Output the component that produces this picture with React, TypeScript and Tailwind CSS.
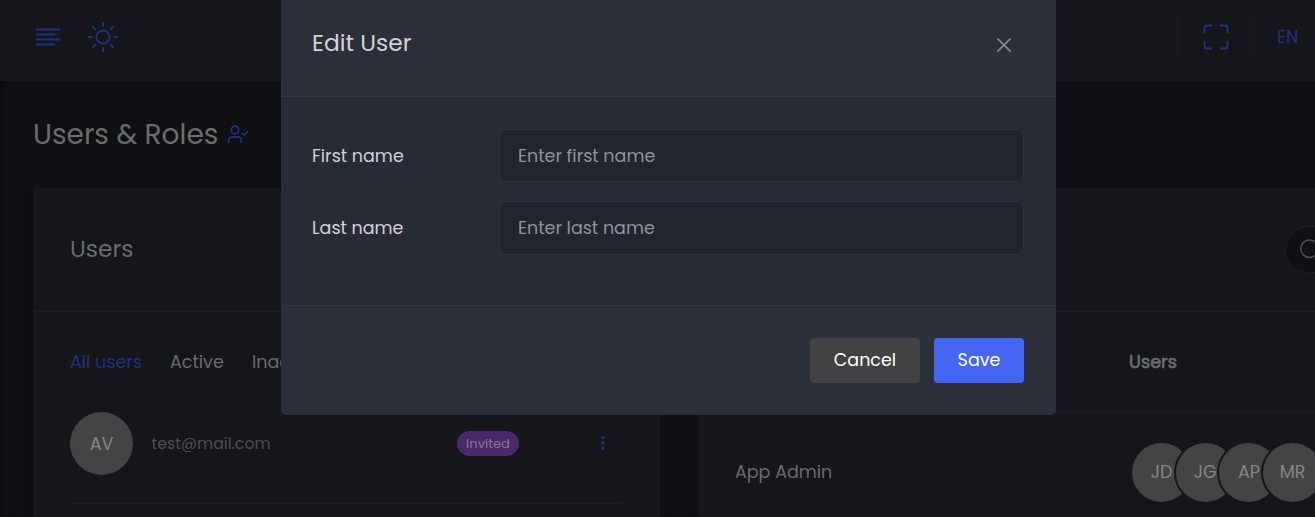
import React from "react";

const avatars = ["JD", "JG", "AP", "MR"];

function MenuIcon() {
  return (
    <svg className="h-[30px] w-[26px]" viewBox="0 0 26 30" stroke="currentColor" strokeWidth="2">
      <path d="M1 7.5h24.3M1 12.5h19.3M1 17.5h24.3M1 22.5h19.3" />
    </svg>
  );
}

function SunIcon() {
  return (
    <svg className="h-[30px] w-[30px]" viewBox="-15 -15 30 30" fill="none" stroke="currentColor" strokeWidth="2">
      <circle r="6.6" />
      <path d="M0-15v4.7M0 10.3V15M-15 0h4.7M10.3 0H15M-10.5-10.5l3.3 3.3M7.2 7.2l3.3 3.3M10.5-10.5L7.2-7.2M-7.2 7.2l-3.3 3.3" />
    </svg>
  );
}

function UserCheckIcon() {
  return (
    <svg className="h-[20px] w-[22px]" viewBox="0 0 22 20" fill="none" stroke="currentColor" strokeWidth="1.7" strokeLinecap="round" strokeLinejoin="round">
      <circle cx="8" cy="5" r="3.8" />
      <path d="M1.7 17.3v-1.9a3.6 3.6 0 0 1 3.6-3.6h5.3a3.6 3.6 0 0 1 3.6 3.6v1.9M15.2 8.3l2 1.8 3.4-3.6" />
    </svg>
  );
}

function FullscreenIcon() {
  return (
    <svg className="h-[26px] w-[26px]" viewBox="0 0 26 26" fill="none" stroke="currentColor" strokeWidth="2">
      <path d="M1.5 9V4a2.5 2.5 0 0 1 2.5-2.5h5M17 1.5h5A2.5 2.5 0 0 1 24.5 4v5M24.5 17v5a2.5 2.5 0 0 1-2.5 2.5h-5M9 24.5H4A2.5 2.5 0 0 1 1.5 22v-5" />
    </svg>
  );
}

function Field({ label, placeholder, className }: { label: string; placeholder: string; className: string }) {
  return (
    <label className={"flex items-center " + className}>
      <span className="w-[187px] shrink-0 pt-px text-[17.5px] text-[#d2d2d3]">{label}</span>
      <input
        className="h-full min-w-0 flex-1 rounded-[7px] border border-[#2e323e] bg-[#21252d] px-[18px] text-[17.5px] outline-none placeholder:text-[#90939b]"
        placeholder={placeholder}
      />
    </label>
  );
}

export default function App() {
  return (
    <div className="relative h-[517px] w-full overflow-hidden bg-[#0f1013] font-['Poppins','Inter',sans-serif] text-[17.5px] text-[#6b6b6c]">
      <header className="flex h-[81px] items-start bg-[#141619] text-[#22317d] shadow-[0_0_10px_rgba(0,0,0,0.12)]">
        <div className="flex items-center gap-[27px] pt-[22px] pl-[35px]">
          <MenuIcon />
          <SunIcon />
        </div>
        <div className="mt-[15px] ml-auto flex h-[44px] w-[138px] shrink-0 items-center">
          <div className="flex h-full w-[76px] items-center justify-center border-l border-[#1b1d21]">
            <FullscreenIcon />
          </div>
          <div className="flex h-full flex-1 items-center border-l border-[#1b1d21] pt-px pl-[23px]">EN</div>
        </div>
      </header>

      <main className="h-[436px] pl-[33px] shadow-[inset_7px_0_7px_-5px_rgba(0,0,0,0.35)]">
        <div className="flex h-[107px] items-center">
          <h1 className="w-[194px] text-[28px] whitespace-nowrap">Users &amp; Roles</h1>
          <span className="text-[#22317d]"><UserCheckIcon /></span>
        </div>

        <div className="flex gap-[38px]">
          <section className="h-[340px] w-[627px] shrink-0 rounded-t-[3px] bg-[#15161a] shadow-[0_0_8px_rgba(0,0,0,0.12)]">
            <div className="flex h-[124px] items-center border-b border-[#1b1d20] px-[37px] pb-[2px]">
              <h2 className="text-[23.4px]">Users</h2>
            </div>
            <nav className="flex h-[100px] items-center px-[37px]">
              <span className="w-[100px] text-[#22317d]">All users</span>
              <span className="w-[82px]">Active</span>
              <span>Inactive</span>
            </nav>
            <div className="mx-[37px] flex h-[92px] items-start border-b border-[#1b1d20]">
              <div className="flex h-[63px] w-[63px] items-center justify-center rounded-full bg-[#444444] pt-[2px] text-[#858585]">AV</div>
              <span className="flex h-[63px] w-[305px] items-center pl-[18.5px] text-[15.75px] text-[#4d4e51]">test@mail.com</span>
              <div className="flex h-[63px] w-[81px] items-center pl-[19px]">
                <span className="flex h-[25px] w-[62px] items-center justify-center rounded-full bg-[#4b276c] text-[13.1px] text-[#817b87]">Invited</span>
              </div>
              <svg className="mt-[22px] ml-[81px] h-[18px] w-[6px]" viewBox="0 0 6 18" fill="#22317d">
                <circle cx="3" cy="3.7" r="1.7" />
                <circle cx="3" cy="9" r="1.7" />
                <circle cx="3" cy="14.3" r="1.7" />
              </svg>
            </div>
          </section>

          <section className="h-[340px] w-[627px] shrink-0 rounded-t-[3px] bg-[#15161a] shadow-[0_0_8px_rgba(0,0,0,0.12)]">
            <div className="flex h-[124px] items-center border-b border-[#1b1d20] pl-[587px]">
              <div className="flex h-[47px] w-[200px] shrink-0 items-center rounded-full border border-[#1b1d20] bg-[#0f1013] pl-[13px]">
                <svg className="h-[24px] w-[24px]" viewBox="0 0 24 24" fill="none" stroke="#515154" strokeWidth="1.5">
                  <circle cx="10.5" cy="10.7" r="8.7" />
                  <path d="M17 17l5 5" />
                </svg>
              </div>
            </div>
            <div className="flex h-[101px] items-center border-b border-[#1b1d20] pl-[431px] tracking-[0.1px] [-webkit-text-stroke:0.7px_#6b6b6c]">Users</div>
            <div className="flex h-[119px] items-center pl-[37px]">
              <span className="w-[395px] shrink-0">App Admin</span>
              <div className="flex">
                {avatars.map((name) => (
                  <span key={name} className="-mr-[19.3px] flex h-[63px] w-[63px] shrink-0 items-center justify-center rounded-full border-2 border-[#15161a] bg-[#444444] text-[#858585]">{name}</span>
                ))}
              </div>
            </div>
          </section>
        </div>
      </main>

      <div role="dialog" className="absolute top-0 left-[281px] flex h-[415px] w-[775px] flex-col rounded-b-[5px] bg-[#2b2f39]">
        <div className="flex h-[97px] items-start justify-between border-b border-[#333641] pr-[44px] pl-[31px]">
          <h3 className="pt-[25px] text-[23.4px] leading-[36px] text-[#d2d2d3]">Edit User</h3>
          <svg className="mt-[37px] h-[16px] w-[16px]" viewBox="0 0 16 16" stroke="#858890" strokeWidth="1.7">
            <path d="M1.3 1.3l13.4 13.4M14.7 1.3L1.3 14.7" />
          </svg>
        </div>
        <div className="h-[209px] border-b border-[#333641] bg-[#272b35] pt-[32px] pr-[32px] pl-[31px]">
          <Field label="First name" placeholder="Enter first name" className="h-[53px]" />
          <Field label="Last name" placeholder="Enter last name" className="mt-[19px] h-[54px]" />
        </div>
        <div className="flex justify-end gap-[14px] pt-[32px] pr-[32px] text-white">
          <button className="h-[45px] w-[110px] rounded-[4px] bg-[#424242]">Cancel</button>
          <button className="h-[45px] w-[90px] rounded-[4px] bg-[#4466f2]">Save</button>
        </div>
      </div>
    </div>
  );
}
